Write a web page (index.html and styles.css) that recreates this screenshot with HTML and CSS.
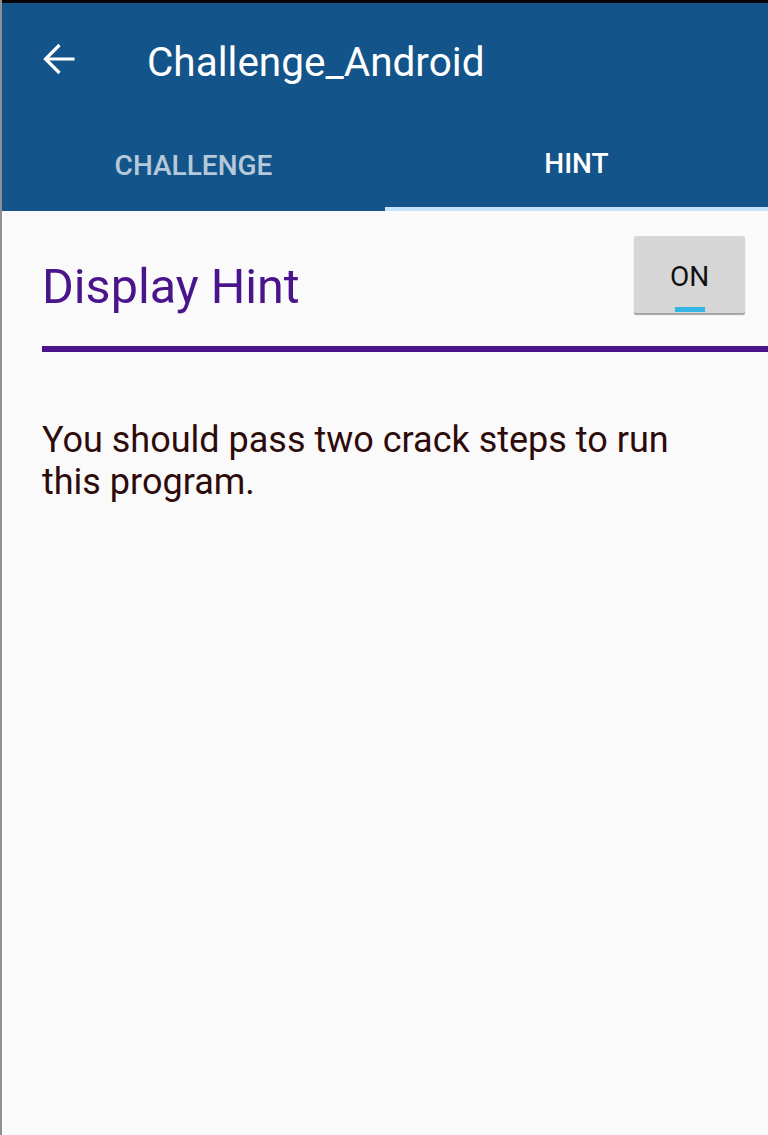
FILE: index.html
```html
<!DOCTYPE html>
<html>
<head>
<meta charset="utf-8">
<link rel="stylesheet" href="styles.css">
</head>
<body>
<div class="screen">
  <div class="statusline"></div>
  <header class="appbar">
    <div class="toolbar">
      <svg class="back" width="32" height="32" viewBox="0 0 32 32"><path d="M31.5 16H2.5M16.5 2L2.5 16L16.5 30" fill="none" stroke="#fff" stroke-width="3.2"/></svg>
      <span class="title">Challenge_Android</span>
    </div>
    <nav class="tabs">
      <div class="tab">CHALLENGE</div>
      <div class="tab active">HINT</div>
    </nav>
  </header>
  <main class="content">
    <div class="hint-row">
      <h1 class="hint-title">Display Hint</h1>
      <button class="toggle"><span class="toggle-label">ON</span><span class="toggle-bar"></span></button>
    </div>
    <div class="divider"></div>
    <p class="hint-text">You should pass two crack steps to run this program.</p>
  </main>
</div>
</body>
</html>
```
FILE: styles.css
```css
html, body {
  margin: 0;
  padding: 0;
  height: 100%;
}
body {
  font-family: Roboto, "Noto Sans", sans-serif;
  background: #fafafa;
}
.screen {
  min-height: 1135px;
  border-left: 2px solid #8f8f8f;
  background: #fafafa;
  box-sizing: border-box;
}
.statusline {
  height: 3px;
  background: #050505;
}
.appbar {
  background: #13558a;
}
.toolbar {
  height: 112px;
  display: flex;
  align-items: center;
  padding-left: 41px;
}
.back {
  display: block;
  margin-top: 0;
}
.title {
  color: #fff;
  font-size: 40.5px;
  margin-left: 72px;
  margin-top: 6px;
}
.tabs {
  display: grid;
  grid-template-columns: 1fr 1fr;
  height: 96px;
}
.tab {
  display: flex;
  align-items: center;
  justify-content: center;
  color: rgba(255,255,255,0.7);
  font-size: 28px;
  font-weight: 500;
  box-sizing: border-box;
  padding-top: 4px;
}
.tab.active {
  color: #fff;
  border-bottom: 4px solid #c6e4fb;
}
.content {
  padding: 25px 0 0 40px;
}
.hint-row {
  display: flex;
  justify-content: space-between;
  align-items: flex-start;
}
.hint-title {
  margin: 23px 0 0 0;
  font-size: 48.5px;
  font-weight: 400;
  color: #4a148c;
  line-height: 56px;
}
.toggle {
  width: 111px;
  height: 77px;
  margin-right: 23px;
  border: none;
  border-radius: 2px;
  background: #d6d6d6;
  box-shadow: 0 2px 1px rgba(0,0,0,0.35);
  display: flex;
  flex-direction: column;
  align-items: center;
  padding: 0;
  font-family: Roboto, "Noto Sans", sans-serif;
}
.toggle-label {
  margin-top: 25px;
  font-size: 28px;
  line-height: 32px;
  color: #111;
}
.toggle-bar {
  margin-top: 14px;
  width: 30px;
  height: 5px;
  background: #33b5e5;
}
.divider {
  margin-top: 31px;
  height: 6px;
  background: #4a148c;
}
.hint-text {
  margin: 67px 0 0 0;
  width: 660px;
  font-size: 36px;
  line-height: 42px;
  color: #2d0b0b;
}
```
